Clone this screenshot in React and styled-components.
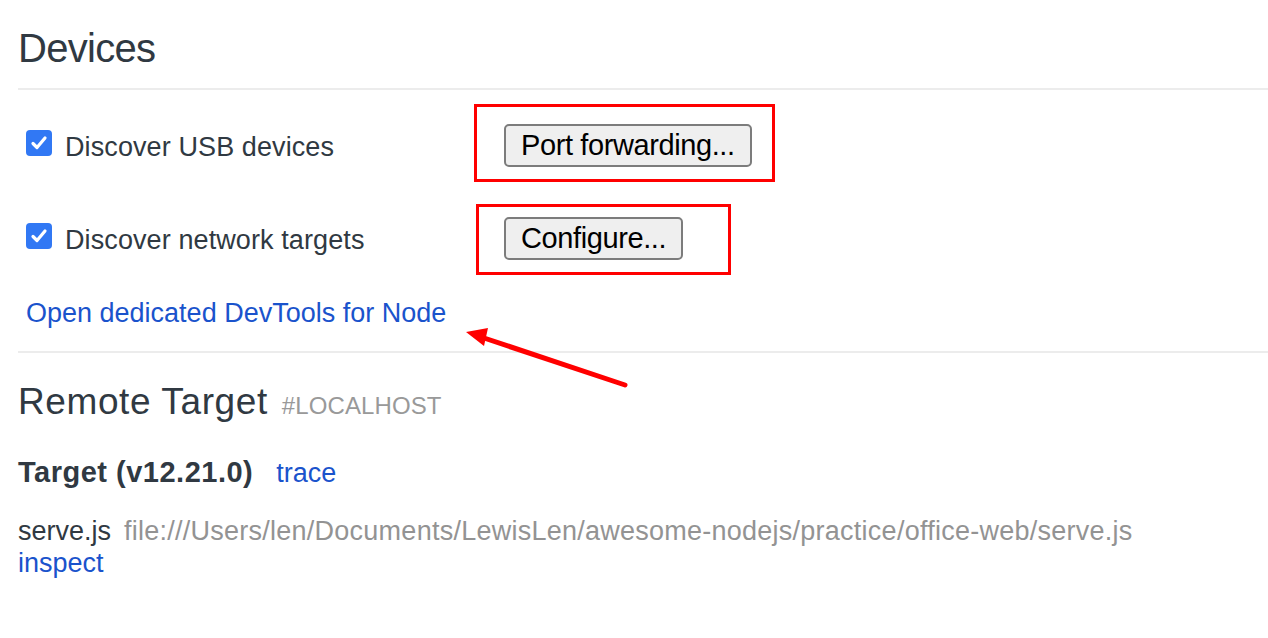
import React from "react";
import styled, { createGlobalStyle } from "styled-components";

const GlobalStyle = createGlobalStyle`
  body {
    margin: 0;
    background: #fff;
    color: #303942;
    font-family: "Liberation Sans", Arial, sans-serif;
  }
`;

const Page = styled.div`
  position: relative;
  padding: 24px 0 40px 18px;
  min-height: 574px;
`;

const Heading = styled.h1`
  margin: 0;
  font-size: ${(p) => (p.small ? "37px" : "40px")};
  line-height: ${(p) => (p.small ? "44px" : "48px")};
  letter-spacing: ${(p) => (p.small ? "0.6px" : "-0.7px")};
  font-weight: normal;
  color: #303942;
`;

const HeadingNote = styled.span`
  margin-left: 14px;
  font-size: 24px;
  letter-spacing: 0.1px;
  color: #999;
`;

const Divider = styled.hr`
  margin: ${(p) => p.margin};
  border: 0;
  height: 2px;
  background: #ececec;
`;

const Row = styled.div`
  display: grid;
  grid-template-columns: 478px auto;
  align-items: center;
  height: 43px;
  padding-left: 8px;
  margin-bottom: ${(p) => p.gap || "0"};
`;

const Label = styled.label`
  display: flex;
  align-items: center;
  gap: 13px;
  padding-top: 3px;
  font-size: 27px;
  letter-spacing: 0.1px;
`;

const Box = styled.span`
  width: 26px;
  height: 26px;
  margin-bottom: 8px;
  border-radius: 4px;
  background: #3178f4;
  display: flex;
  align-items: center;
  justify-content: center;
`;

const Button = styled.button`
  justify-self: start;
  height: 43px;
  padding: 0 15px;
  font-family: "Liberation Sans", Arial, sans-serif;
  font-size: 29px;
  letter-spacing: -0.4px;
  color: #000;
  background: #efefef;
  border: 2px solid #7c7c7c;
  border-radius: 5px;
`;

const Link = styled.a`
  color: #1a53cc;
  text-decoration: none;
  cursor: pointer;
`;

const NodeLink = styled(Link)`
  display: block;
  margin: 38px 0 0 8px;
  font-size: 27px;
  line-height: 31px;
`;

const TargetTitle = styled.div`
  margin-top: 28px;
  font-size: 29px;
  letter-spacing: 0.5px;
  font-weight: bold;
  color: #303942;
`;

const TraceLink = styled(Link)`
  margin-left: 23px;
  font-size: 27px;
  letter-spacing: 0;
  font-weight: normal;
`;

const TargetLine = styled.div`
  margin-top: ${(p) => p.top || "0"};
  font-size: 27px;
  line-height: 32px;
`;

const Url = styled.span`
  margin-left: 13px;
  letter-spacing: 0.25px;
  color: #939393;
`;

const Callout = styled.div`
  position: absolute;
  box-sizing: border-box;
  border: 3px solid #ff0000;
`;

const Arrow = styled.svg`
  position: absolute;
  left: 0;
  top: 0;
  pointer-events: none;
`;

const Checkbox = () => (
  <Box>
    <svg width="18" height="18" viewBox="0 0 18 18">
      <path
        d="M3 9.5 L7 13.5 L15 4"
        fill="none"
        stroke="#fff"
        strokeWidth="3.2"
        strokeLinecap="round"
        strokeLinejoin="round"
      />
    </svg>
  </Box>
);

const App = () => (
  <Page>
    <GlobalStyle />
    <Heading>Devices</Heading>
    <Divider margin="16px 0 34px 0" />

    <Row gap="50px">
      <Label>
        <Checkbox />
        Discover USB devices
      </Label>
      <Button>Port forwarding...</Button>
    </Row>
    <Row>
      <Label>
        <Checkbox />
        Discover network targets
      </Label>
      <Button>Configure...</Button>
    </Row>

    <NodeLink>Open dedicated DevTools for Node</NodeLink>
    <Divider margin="22px 0 27px 0" />

    <Heading small>
      Remote Target<HeadingNote>#LOCALHOST</HeadingNote>
    </Heading>
    <TargetTitle>
      Target (v12.21.0)<TraceLink>trace</TraceLink>
    </TargetTitle>
    <TargetLine top="26px">
      serve.js
      <Url>file:///Users/len/Documents/LewisLen/awesome-nodejs/practice/office-web/serve.js</Url>
    </TargetLine>
    <TargetLine>
      <Link>inspect</Link>
    </TargetLine>

    <Callout style={{ left: 474, top: 104, width: 301, height: 78 }} />
    <Callout style={{ left: 476, top: 204, width: 255, height: 71 }} />
    <Arrow width="1268" height="638">
      <line x1="625" y1="385" x2="478" y2="336" stroke="#ff0000" strokeWidth="5" strokeLinecap="round" />
      <polygon points="466,332 484,346 488,328" fill="#ff0000" />
    </Arrow>
  </Page>
);

export default App;
